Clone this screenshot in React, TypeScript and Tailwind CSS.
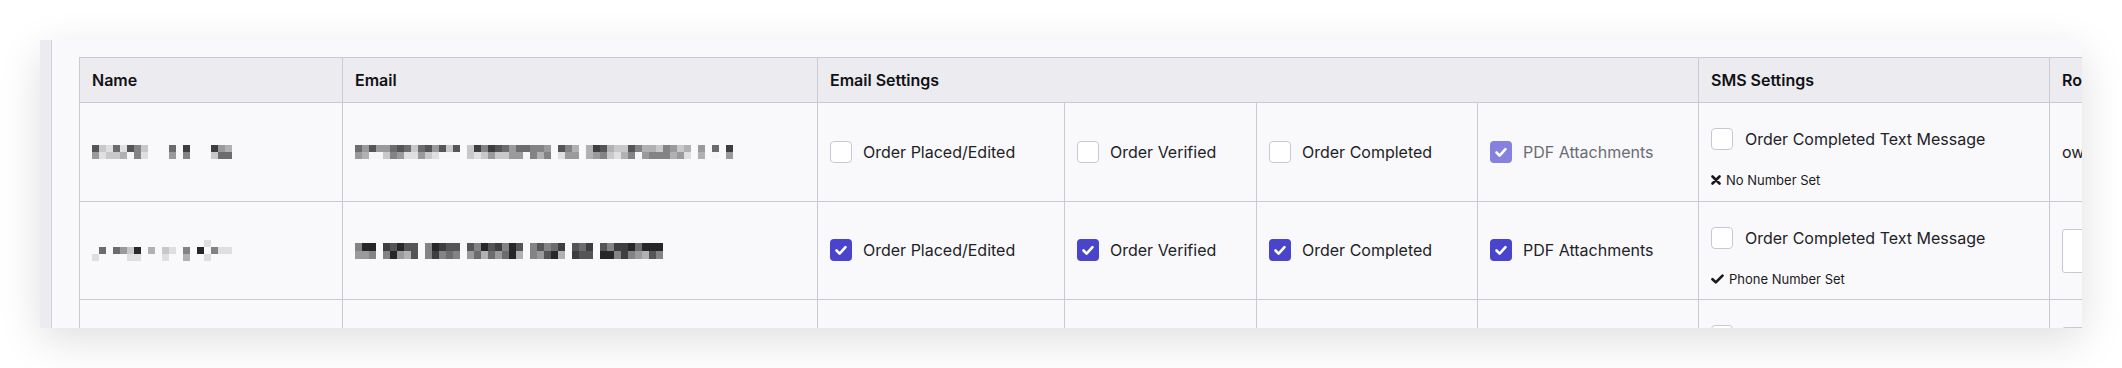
import React from "react";

const shade = (d: number) => {
  const v = Math.round(246 - d * 23);
  return `rgb(${v},${v},${Math.min(255, v + 2)})`;
};

function seeded(seed: number) {
  let s = seed;
  return () => {
    s = (s * 1103515245 + 12345) % 2147483648;
    return s / 2147483648;
  };
}

function gen(seed: number, count: number, gaps: number[], min: number, max: number) {
  const r = seeded(seed);
  let out = "";
  for (let i = 0; i < count; i++) {
    if (gaps.includes(i)) {
      out += ".";
      r();
    } else {
      out += String(Math.floor(min + r() * (max - min + 1)));
    }
  }
  return out;
}

const email1 = [
  gen(11, 54, [15, 28, 32, 48, 50, 52], 2, 8),
  gen(23, 54, [15, 28, 32, 48, 50, 52], 0, 5),
];
const email2 = [
  gen(37, 44, [3, 9, 15, 24, 30, 34], 5, 9),
  gen(51, 44, [3, 9, 15, 24, 30, 34], 3, 9),
];

const name1 = ["72161752...6.8...843", "41223051...4.5...266"];
const name2 = ["................1...", ".6.6429.3.21.5.9.511", "1....11...1..3..1..."];

function Mosaic({ rows, h }: { rows: string[]; h: number }) {
  return (
    <div className="flex flex-col">
      {rows.map((r, i) => (
        <div key={i} className="flex">
          {r.split("").map((c, j) => (
            <div
              key={j}
              className="w-[7px] shrink-0"
              style={{ height: h, background: c === "." ? "transparent" : shade(+c) }}
            />
          ))}
        </div>
      ))}
    </div>
  );
}

function Box({ checked, faded }: { checked?: boolean; faded?: boolean }) {
  if (checked) {
    return (
      <div
        className={`w-[22px] h-[22px] rounded-[4px] shrink-0 flex items-center justify-center ${
          faded ? "bg-[#8781de]" : "bg-[#4a43cb]"
        }`}
      >
        <svg width="22" height="22" viewBox="0 0 22 22" fill="none">
          <path d="M6.5 11.5 L9.6 14.6 L15.5 8.2" stroke="white" strokeWidth="2.6" strokeLinecap="round" strokeLinejoin="round" />
        </svg>
      </div>
    );
  }
  return <div className="w-[22px] h-[22px] rounded-[4px] shrink-0 border border-[#c8c8d2] bg-white" />;
}

function Opt({ label, checked, faded }: { label: string; checked?: boolean; faded?: boolean }) {
  return (
    <div className="flex items-center">
      <Box checked={checked} faded={faded} />
      <span className={`ml-[11px] ${faded ? "text-[#6b6b75]" : ""}`}>{label}</span>
    </div>
  );
}

function XIcon() {
  return (
    <svg width="10" height="10" viewBox="0 0 10 10" className="shrink-0">
      <path d="M1.5 1.5 L8.5 8.5 M8.5 1.5 L1.5 8.5" stroke="#1a1a1e" strokeWidth="2.6" strokeLinecap="round" />
    </svg>
  );
}

function CheckIcon() {
  return (
    <svg width="13" height="10" viewBox="0 0 13 10" className="shrink-0">
      <path d="M1.5 5.2 L4.8 8.4 L11.5 1.6" stroke="#1a1a1e" strokeWidth="2.7" fill="none" strokeLinecap="round" strokeLinejoin="round" />
    </svg>
  );
}

function Sms({ set }: { set: boolean }) {
  return (
    <td className="border border-[#cacad4] px-3 align-top pt-[24px]">
      <div className="flex items-center h-[24px]">
        <Box />
        <span className="ml-[12px]">Order Completed Text Message</span>
      </div>
      <div className="mt-[20px] flex items-center text-[13px] leading-[18px] text-[#1a1a1e]">
        {set ? <CheckIcon /> : <XIcon />}
        <span className="ml-[5px]">{set ? "Phone Number Set" : "No Number Set"}</span>
      </div>
    </td>
  );
}

const td = "border border-[#cacad4] px-3 align-middle";
const th = "border border-[#cacad4] px-3 text-left font-semibold text-[#111114] align-middle";

export default function App() {
  return (
    <div className="w-[2122px] h-[368px] bg-white pt-[40px] pl-[40px] overflow-hidden font-['Inter',sans-serif]">
      <div className="w-[2042px] h-[288px] flex overflow-hidden bg-[#f9f9fb] shadow-[0_12px_40px_rgba(0,0,0,0.13)]">
        <div className="w-[12px] shrink-0 bg-[#ebebf0] border-r border-[#d2d2da]" />
        <div className="flex-1 pl-[27px] pt-[17px] overflow-hidden">
          <table className="table-fixed border-collapse w-[2190px] text-[16px] leading-[24px] text-[#222226]">
            <colgroup>
              <col className="w-[263px]" />
              <col className="w-[475px]" />
              <col className="w-[247px]" />
              <col className="w-[192px]" />
              <col className="w-[221px]" />
              <col className="w-[221px]" />
              <col className="w-[351px]" />
              <col className="w-[220px]" />
            </colgroup>
            <thead>
              <tr className="h-[45px] bg-[#ebebf0]">
                <th className={th}>Name</th>
                <th className={th}>Email</th>
                <th className={th} colSpan={4}>
                  Email Settings
                </th>
                <th className={th}>SMS Settings</th>
                <th className={th}>Role</th>
              </tr>
            </thead>
            <tbody>
              <tr className="h-[99px]">
                <td className={td}>
                  <Mosaic rows={name1} h={7} />
                </td>
                <td className={td}>
                  <Mosaic rows={email1} h={7} />
                </td>
                <td className={td}>
                  <Opt label="Order Placed/Edited" />
                </td>
                <td className={td}>
                  <Opt label="Order Verified" />
                </td>
                <td className={td}>
                  <Opt label="Order Completed" />
                </td>
                <td className={td}>
                  <Opt label="PDF Attachments" checked faded />
                </td>
                <Sms set={false} />
                <td className={td}>owner</td>
              </tr>
              <tr className="h-[98px]">
                <td className={td}>
                  <Mosaic rows={name2} h={7} />
                </td>
                <td className={td}>
                  <Mosaic rows={email2} h={8} />
                </td>
                <td className={`${td} pb-[2px]`}>
                  <Opt label="Order Placed/Edited" checked />
                </td>
                <td className={`${td} pb-[2px]`}>
                  <Opt label="Order Verified" checked />
                </td>
                <td className={`${td} pb-[2px]`}>
                  <Opt label="Order Completed" checked />
                </td>
                <td className={`${td} pb-[2px]`}>
                  <Opt label="PDF Attachments" checked />
                </td>
                <Sms set={true} />
                <td className={td}>
                  <div className="h-[44px] w-[200px] border border-[#c8c8d2] bg-white rounded-[3px]" />
                </td>
              </tr>
              <tr className="h-[98px]">
                <td className={td}>
                  <Mosaic rows={name2} h={7} />
                </td>
                <td className={td}>
                  <Mosaic rows={email2} h={8} />
                </td>
                <td className={td}>
                  <Opt label="Order Placed/Edited" checked />
                </td>
                <td className={td}>
                  <Opt label="Order Verified" checked />
                </td>
                <td className={td}>
                  <Opt label="Order Completed" checked />
                </td>
                <td className={td}>
                  <Opt label="PDF Attachments" checked />
                </td>
                <Sms set={true} />
                <td className={td}>
                  <div className="h-[44px] w-[200px] border border-[#c8c8d2] bg-white rounded-[3px]" />
                </td>
              </tr>
            </tbody>
          </table>
        </div>
      </div>
    </div>
  );
}
